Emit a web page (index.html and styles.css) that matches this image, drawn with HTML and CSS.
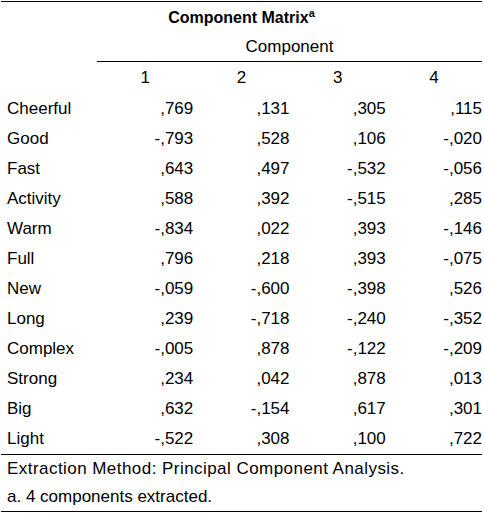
FILE: index.html
```html
<!DOCTYPE html>
<html lang="en">
	<head>
		<meta charset="UTF-8" />
		<meta name="viewport" content="width=device-width, initial-scale=1.0" />
		<title>Component Matrix</title>
		<link rel="stylesheet" href="styles.css">
	</head>
	<body>
		<table class="matrix">
			<colgroup>
				<col class="col-label" />
				<col class="col-num" />
				<col class="col-num" />
				<col class="col-num" />
				<col class="col-num" />
			</colgroup>
			<thead>
				<tr class="title-row">
					<th colspan="5">Component Matrix<sup>a</sup></th>
				</tr>
				<tr class="group-row">
					<th></th>
					<th colspan="4" class="group">Component</th>
				</tr>
				<tr class="head-row">
					<th></th>
					<th>1</th>
					<th>2</th>
					<th>3</th>
					<th>4</th>
				</tr>
			</thead>
			<tbody>
				<tr><td>Cheerful</td><td>,769</td><td>,131</td><td>,305</td><td>,115</td></tr>
				<tr><td>Good</td><td>-,793</td><td>,528</td><td>,106</td><td>-,020</td></tr>
				<tr><td>Fast</td><td>,643</td><td>,497</td><td>-,532</td><td>-,056</td></tr>
				<tr><td>Activity</td><td>,588</td><td>,392</td><td>-,515</td><td>,285</td></tr>
				<tr><td>Warm</td><td>-,834</td><td>,022</td><td>,393</td><td>-,146</td></tr>
				<tr><td>Full</td><td>,796</td><td>,218</td><td>,393</td><td>-,075</td></tr>
				<tr><td>New</td><td>-,059</td><td>-,600</td><td>-,398</td><td>,526</td></tr>
				<tr><td>Long</td><td>,239</td><td>-,718</td><td>-,240</td><td>-,352</td></tr>
				<tr><td>Complex</td><td>-,005</td><td>,878</td><td>-,122</td><td>-,209</td></tr>
				<tr><td>Strong</td><td>,234</td><td>,042</td><td>,878</td><td>,013</td></tr>
				<tr><td>Big</td><td>,632</td><td>-,154</td><td>,617</td><td>,301</td></tr>
				<tr><td>Light</td><td>-,522</td><td>,308</td><td>,100</td><td>,722</td></tr>
			</tbody>
			<tfoot>
				<tr class="note-row first"><td colspan="5" class="method">Extraction Method: Principal Component Analysis.</td></tr>
				<tr class="note-row"><td colspan="5">a. 4 components extracted.</td></tr>
			</tfoot>
		</table>
	</body>
</html>
```

FILE: styles.css
```css
body {
	margin: 0;
	background: #fff;
	color: #000;
	font-family: 'Liberation Sans', Arial, sans-serif;
	font-size: 17px;
}

.matrix {
	margin: 1px 0 0 1px;
	width: 481px;
	border-collapse: collapse;
	table-layout: fixed;
	border-top: 1px solid #000;
	border-bottom: 1px solid #000;
}

.col-label {
	width: 96px;
}

.matrix th,
.matrix td {
	padding: 0;
	font-weight: normal;
	white-space: nowrap;
}

.title-row th {
	height: 31px;
	font-size: 16px;
	font-weight: bold;
	text-align: center;
	vertical-align: middle;
}

.title-row sup {
	font-size: 11px;
	font-weight: bold;
	vertical-align: 6px;
	line-height: 0;
}

.group-row th {
	height: 28px;
	text-align: center;
}

.group-row .group {
	border-bottom: 1px solid #000;
}

.head-row th {
	height: 32px;
	text-align: center;
}

tbody td {
	height: 30px;
	text-align: right;
	padding-right: 8px;
}

tbody td:first-child {
	text-align: left;
	padding-left: 6px;
	padding-right: 0;
}

.note-row td {
	height: 28px;
	padding-left: 6px;
	text-align: left;
}

.note-row.first td {
	border-top: 1px solid #000;
}

.note-row .method {
	letter-spacing: 0.45px;
}
```
